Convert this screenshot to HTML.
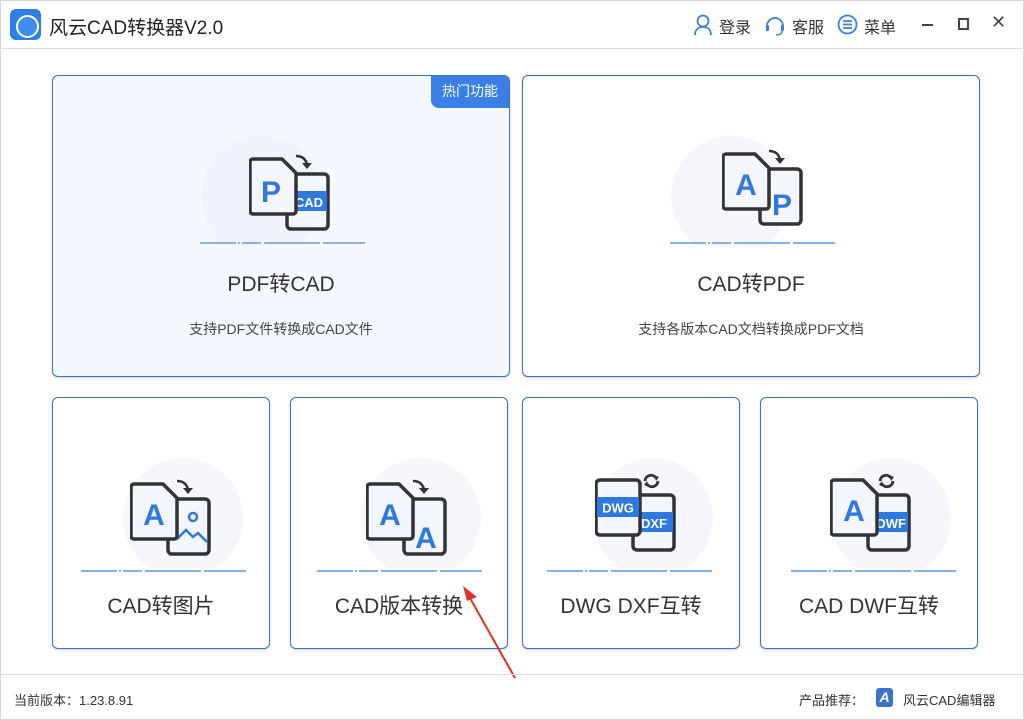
<!DOCTYPE html>
<html><head><meta charset="utf-8"><style>
*{margin:0;padding:0;box-sizing:border-box}
body{width:1024px;height:720px;overflow:hidden;background:#fff;font-family:"Liberation Sans","Noto Sans CJK SC",sans-serif;color:#333;position:relative}
.win{position:absolute;left:0;top:0;width:1024px;height:720px;border:1px solid #d4d4d4}
.tb{position:absolute;left:0;top:0;width:1024px;height:49px;border-bottom:1px solid #dcdcdc}
.logo{position:absolute;left:10px;top:9px;width:31px;height:31px;border-radius:6px;background:#2f7fe8}
.logo:after{content:"";position:absolute;left:6px;top:6px;width:19px;height:19px;border-radius:50%;border:2px solid #fff;background:#3d8cf0}
.title{position:absolute;left:49px;top:13px;font-size:19px;color:#222}
.tr{position:absolute;top:14px;font-size:16px;color:#333}
.card{position:absolute;border:1px solid #3a73b8;border-radius:6px;background:#fff;box-shadow:0 1px 2px rgba(40,90,160,.25);overflow:hidden}
.card .h{position:absolute;left:0;width:100%;text-align:center;font-size:21px;color:#333}
.card .s{position:absolute;left:0;width:100%;text-align:center;font-size:14px;color:#444}
.badge{position:absolute;right:0;top:0;width:78px;height:32px;background:#3a7fe6;color:#fff;font-size:14px;text-align:center;line-height:31px;border-bottom-left-radius:8px}
.ic{position:absolute}
.foot{position:absolute;left:0;top:674px;width:1024px;border-top:1px solid #dcdcdc;height:46px;font-size:13px;color:#333}
</style></head><body>
<div class="win"></div>
<div class="tb">
 <div class="logo"></div>
 <div class="title">风云CAD转换器V2.0</div>
 <svg style="position:absolute;left:693px;top:14px" width="20" height="22" viewBox="0 0 20 22"><circle cx="10" cy="7" r="5.5" fill="none" stroke="#3a7fe0" stroke-width="1.8"/><path d="M2 21c0-5 3-8 8-8s8 3 8 8" fill="none" stroke="#3a7fe0" stroke-width="1.8"/></svg>
 <div class="tr" style="left:719px">登录</div>
 <svg style="position:absolute;left:764px;top:14px" width="22" height="22" viewBox="0 0 22 22"><path d="M3 12a8 8 0 0 1 16 0" fill="none" stroke="#3a7fe0" stroke-width="1.8"/><rect x="2" y="11" width="3" height="6" rx="1" fill="#3a7fe0"/><rect x="17" y="11" width="3" height="6" rx="1" fill="#3a7fe0"/><path d="M18 17c0 3-3 4-6 4" fill="none" stroke="#3a7fe0" stroke-width="1.5"/></svg>
 <div class="tr" style="left:792px">客服</div>
 <svg style="position:absolute;left:837px;top:14px" width="21" height="21" viewBox="0 0 21 21"><circle cx="10.5" cy="10.5" r="9" fill="none" stroke="#3a7fe0" stroke-width="1.8"/><path d="M6 7h9M6 10.5h9M6 14h9" stroke="#3a7fe0" stroke-width="1.8"/></svg>
 <div class="tr" style="left:864px">菜单</div>
 <div style="position:absolute;left:922px;top:24px;width:11px;height:2px;background:#444"></div>
 <div style="position:absolute;left:958px;top:18px;width:11px;height:12px;border:2px solid #444"></div>
 <div class="tr" style="left:991px;top:12px;font-size:18px;color:#444">✕</div>
</div>

<svg width="0" height="0" style="position:absolute"><defs>
<g id="back"><rect x="38" y="20" width="41" height="55" rx="4" fill="#f3f6fc" stroke="#333" stroke-width="3.5"/></g>
<path id="front" d="M4 5h29l14 14v38a3 3 0 0 1-3 3h-40a3 3 0 0 1-3-3v-49a3 3 0 0 1 3-3z" fill="#f3f6fc" stroke="#333" stroke-width="3.5" stroke-linejoin="round"/>
<g id="arr"><path d="M47 2c6 0 10 3 11 9" fill="none" stroke="#333" stroke-width="2.6"/><path d="M53 9l5 6 5-6z" fill="#333"/></g>
<g id="cyc"><path d="M50 9a6 6 0 0 1 11-3M63 9a6 6 0 0 1-11 3" fill="none" stroke="#333" stroke-width="2.8"/><path d="M59 3l5 2-3 4zM54 15l-5-2 3-4z" fill="#333"/></g>
<g id="dash"><path d="M0 1h36M38 1h2M42 1h19M64 1h56M123 1h42" stroke="#8aaee6" stroke-width="2"/></g>
</defs></svg>

<!-- Card 1 -->
<div class="card" style="left:52px;top:75px;width:458px;height:302px;background:#f5f8fe">
 <svg class="ic" style="left:118px;top:50px" width="180" height="120"><circle cx="90" cy="70" r="60" fill="#eff3fb"/></svg>
 <svg class="ic" style="left:196px;top:78px" width="82" height="78" viewBox="0 0 82 78"><use href="#back"/><rect x="40" y="37" width="38" height="20" fill="#2f78e0"/><text x="60" y="53" text-anchor="middle" font-family="Liberation Sans" font-weight="bold" font-size="13" fill="#fff">CAD</text><use href="#front"/><text x="22" y="48" text-anchor="middle" font-family="Liberation Sans" font-weight="bold" font-size="30" fill="#2f78e0">P</text><use href="#arr"/></svg>
 <svg class="ic" style="left:147px;top:166px" width="170" height="3"><use href="#dash"/></svg>
 <div class="h" style="top:192px">PDF转CAD</div>
 <div class="s" style="top:243px">支持PDF文件转换成CAD文件</div>
 <div class="badge">热门功能</div>
</div>
<!-- Card 2 -->
<div class="card" style="left:522px;top:75px;width:458px;height:302px">
 <svg class="ic" style="left:118px;top:50px" width="180" height="120"><circle cx="90" cy="70" r="60" fill="#f5f7fc"/></svg>
 <svg class="ic" style="left:199px;top:73px" width="82" height="78" viewBox="0 0 82 78"><use href="#back"/><text x="60" y="66" text-anchor="middle" font-family="Liberation Sans" font-weight="bold" font-size="30" fill="#2f78e0">P</text><use href="#front"/><text x="24" y="46" text-anchor="middle" font-family="Liberation Sans" font-weight="bold" font-size="30" fill="#2f78e0">A</text><use href="#arr"/></svg>
 <svg class="ic" style="left:147px;top:166px" width="170" height="3"><use href="#dash"/></svg>
 <div class="h" style="top:192px">CAD转PDF</div>
 <div class="s" style="top:243px">支持各版本CAD文档转换成PDF文档</div>
</div>
<!-- Bottom cards -->
<div class="card" style="left:52px;top:397px;width:218px;height:252px">
 <svg class="ic" style="left:40px;top:50px" width="160" height="120"><circle cx="90" cy="70" r="60" fill="#f5f7fc"/></svg>
 <svg class="ic" style="left:77px;top:81px" width="82" height="78" viewBox="0 0 82 78"><use href="#back"/><circle cx="63" cy="38" r="4" fill="none" stroke="#2f78e0" stroke-width="2.5"/><path d="M47 60l9-9 7 7 5-4 9 9" fill="none" stroke="#2f78e0" stroke-width="2.5"/><use href="#front"/><text x="24" y="46" text-anchor="middle" font-family="Liberation Sans" font-weight="bold" font-size="30" fill="#2f78e0">A</text><use href="#arr"/></svg>
 <svg class="ic" style="left:28px;top:172px" width="170" height="3"><use href="#dash"/></svg>
 <div class="h" style="top:192px">CAD转图片</div>
</div>
<div class="card" style="left:290px;top:397px;width:218px;height:252px">
 <svg class="ic" style="left:40px;top:50px" width="160" height="120"><circle cx="90" cy="70" r="60" fill="#f5f7fc"/></svg>
 <svg class="ic" style="left:75px;top:81px" width="82" height="78" viewBox="0 0 82 78"><use href="#back"/><text x="60" y="69" text-anchor="middle" font-family="Liberation Sans" font-weight="bold" font-size="30" fill="#2f78e0">A</text><use href="#front"/><text x="24" y="46" text-anchor="middle" font-family="Liberation Sans" font-weight="bold" font-size="30" fill="#2f78e0">A</text><use href="#arr"/></svg>
 <svg class="ic" style="left:26px;top:172px" width="170" height="3"><use href="#dash"/></svg>
 <div class="h" style="top:192px">CAD版本转换</div>
</div>
<div class="card" style="left:522px;top:397px;width:218px;height:252px">
 <svg class="ic" style="left:40px;top:50px" width="160" height="120"><circle cx="90" cy="70" r="60" fill="#f5f7fc"/></svg>
 <svg class="ic" style="left:72px;top:74px" width="82" height="80" viewBox="0 0 82 80"><g transform="translate(0,3)"><use href="#back"/><rect x="40" y="37" width="38" height="20" fill="#2f78e0"/><text x="72" y="53" text-anchor="end" font-family="Liberation Sans" font-weight="bold" font-size="13" fill="#fff">DXF</text><rect x="1" y="5" width="44" height="55" rx="4" fill="#f3f6fc" stroke="#333" stroke-width="3.5"/><rect x="2" y="22" width="42" height="20" fill="#2f78e0"/><text x="23" y="37.5" text-anchor="middle" font-family="Liberation Sans" font-weight="bold" font-size="13" fill="#fff">DWG</text></g><use href="#cyc"/></svg>
 <svg class="ic" style="left:24px;top:172px" width="170" height="3"><use href="#dash"/></svg>
 <div class="h" style="top:192px">DWG DXF互转</div>
</div>
<div class="card" style="left:760px;top:397px;width:218px;height:252px">
 <svg class="ic" style="left:40px;top:50px" width="160" height="120"><circle cx="90" cy="70" r="60" fill="#f5f7fc"/></svg>
 <svg class="ic" style="left:69px;top:74px" width="82" height="80" viewBox="0 0 82 80"><g transform="translate(0,3)"><use href="#back"/><rect x="40" y="37" width="38" height="20" fill="#2f78e0"/><text x="76" y="53" text-anchor="end" font-family="Liberation Sans" font-weight="bold" font-size="13" fill="#fff">DWF</text><use href="#front"/><text x="24" y="46" text-anchor="middle" font-family="Liberation Sans" font-weight="bold" font-size="30" fill="#2f78e0">A</text></g><use href="#cyc"/></svg>
 <svg class="ic" style="left:30px;top:172px" width="170" height="3"><use href="#dash"/></svg>
 <div class="h" style="top:192px">CAD DWF互转</div>
</div>

<svg style="position:absolute;left:0;top:0" width="1024" height="720"><path d="M515 678L470 598" stroke="#e0302a" stroke-width="2"/><path d="M463 586l14 11-10 4z" fill="#e0302a"/></svg>

<div class="foot">
 <div style="position:absolute;left:14px;top:15px">当前版本：1.23.8.91</div>
 <div style="position:absolute;left:799px;top:15px">产品推荐：</div>
 <div style="position:absolute;left:876px;top:13px;width:17px;height:19px;border-radius:3px;background:#3b73c9;color:#fff;font-size:14px;font-style:italic;font-weight:bold;text-align:center;line-height:19px">A</div>
 <div style="position:absolute;left:903px;top:15px">风云CAD编辑器</div>
</div>
</body></html>
